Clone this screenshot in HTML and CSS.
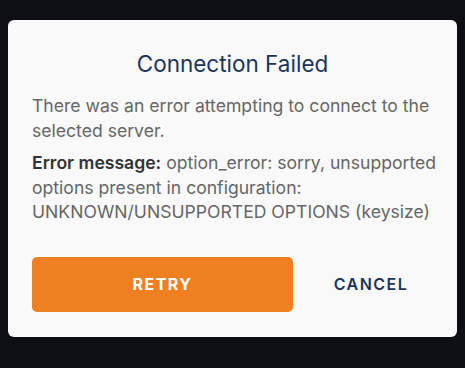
FILE: index.html
```html
<!DOCTYPE html>
<html>
<head>
<meta charset="utf-8">
<link rel="stylesheet" href="styles.css">
</head>
<body>
<div class="dialog">
  <h2 class="title">Connection Failed</h2>
  <p class="text">There was an error attempting to connect to the selected server.</p>
  <p class="text"><strong>Error message:</strong> option_error: sorry, unsupported options present in configuration: UNKNOWN/UNSUPPORTED OPTIONS (keysize)</p>
  <div class="actions">
    <button class="btn retry">RETRY</button>
    <button class="btn cancel">CANCEL</button>
  </div>
</div>
</body>
</html>
```
FILE: styles.css
```css
html, body {
  margin: 0;
  padding: 0;
  background: #0e0f12;
  height: 100%;
}
body {
  padding: 20px 8px 0 8px;
  box-sizing: border-box;
  font-family: Inter, "Noto Sans", sans-serif;
}
.dialog {
  width: 449px;
  height: 317px;
  box-sizing: border-box;
  background: #f9f9f9;
  border-radius: 6px;
  padding: 28px 24px 25px 24px;
}
.title {
  margin: 0 0 14px 0;
  text-align: center;
  font-size: 22.5px;
  line-height: 32px;
  font-weight: 400;
  color: #1c3557;
}
.text {
  margin: 0 -8px 8px 0;
  font-size: 17.6px;
  line-height: 24.5px;
  color: #666666;
}
.text strong {
  color: #333333;
  font-weight: 600;
}
.actions {
  display: flex;
  gap: 16px;
  margin-top: 32px;
}
.btn {
  font-family: Inter, "Noto Sans", sans-serif;
  border: none;
  height: 55px;
  border-radius: 5px;
  font-size: 16px;
  letter-spacing: 1.5px;
  cursor: pointer;
}
.retry {
  width: 261px;
  background: #ee8022;
  color: #ffffff;
  font-weight: 700;
}
.cancel {
  flex: 1;
  background: transparent;
  color: #1c3557;
  font-weight: 600;
}
```
